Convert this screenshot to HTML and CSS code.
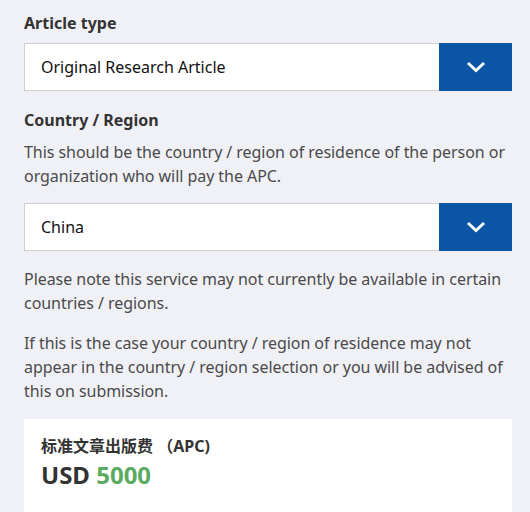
FILE: index.html
```html
<!DOCTYPE html>
<html>
<head>
  <meta charset="utf-8">
  <link rel="stylesheet" href="styles.css">
</head>
<body>
  <div class="form">
    <div class="field">
      <label class="label">Article type</label>
      <div class="select">
        <span class="select_value">Original Research Article</span>
        <span class="select_btn">
          <svg width="20" height="12" viewBox="0 0 20 12"><path d="M2 2 L10 9.5 L18 2" fill="none" stroke="#fff" stroke-width="3"/></svg>
        </span>
      </div>
    </div>

    <div class="field">
      <label class="label">Country / Region</label>
      <p class="hint">This should be the country / region of residence of the person or organization who will pay the APC.</p>
      <div class="select">
        <span class="select_value">China</span>
        <span class="select_btn">
          <svg width="20" height="12" viewBox="0 0 20 12"><path d="M2 2 L10 9.5 L18 2" fill="none" stroke="#fff" stroke-width="3"/></svg>
        </span>
      </div>
    </div>

    <p class="note">Please note this service may not currently be available in certain countries / regions.</p>
    <p class="note">If this is the case your country / region of residence may not appear in the country / region selection or you will be advised of this on submission.</p>

    <div class="card">
      <div class="card_title">标准文章出版费 （APC)</div>
      <div class="price">USD <span class="amount">5000</span></div>
    </div>
  </div>
</body>
</html>
```

FILE: styles.css
```css
body, html {
  margin: 0;
  background-color: #f0f1f7;
  font-family: "Noto Sans", "Noto Sans CJK SC", sans-serif;
  color: #4a4a4a;
}
.form {
  width: 488px;
  padding: 11px 0 0 24px;
}
.field {
  margin-bottom: 16px;
}
.label {
  display: block;
  font-size: 16px;
  line-height: 24px;
  font-weight: bold;
  color: #333;
  margin-bottom: 8px;
}
.field + .field {
  margin-top: 17px;
}
.hint {
  font-size: 16px;
  line-height: 24px;
  letter-spacing: -0.05px;
  margin: 0 0 15px 0;
}
.select {
  display: flex;
  height: 48px;
  box-sizing: border-box;
  border: 1px solid #cfcfd4;
  border-right: none;
  background: #fff;
}
.select_value {
  flex: 1;
  display: flex;
  align-items: center;
  padding-left: 16px;
  font-size: 16px;
  color: #111;
}
.select_btn {
  width: 73px;
  margin: -1px 0;
  background-color: #0a56a5;
  display: flex;
  align-items: center;
  justify-content: center;
}
.note {
  font-size: 16px;
  line-height: 24px;
  letter-spacing: -0.05px;
  margin: 0 0 16px 0;
}
.card {
  background: #fff;
  padding: 15px 17px 20px;
}
.card_title {
  font-size: 16px;
  line-height: 24px;
  font-weight: bold;
  color: #333;
}
.price {
  font-size: 24px;
  line-height: 34px;
  font-weight: bold;
  color: #333;
}
.amount {
  color: #5aab5f;
}
```
